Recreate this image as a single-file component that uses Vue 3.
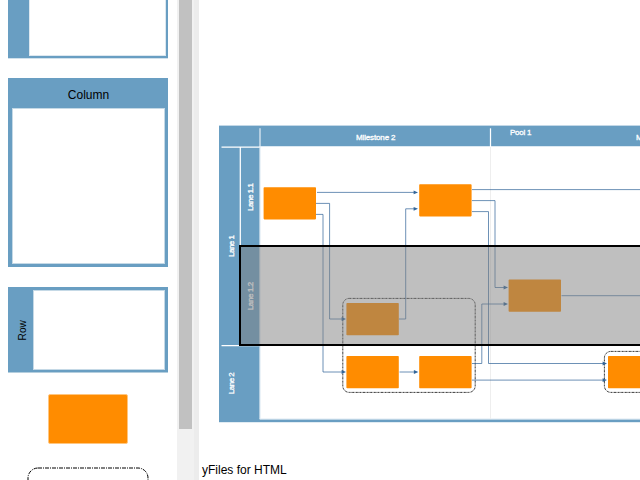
<script setup>
const nodes = [
  [263.6, 187.2], [419.2, 184.2], [346.4, 303], [508.6, 279.6],
  [346.4, 356], [419.2, 356], [608, 356]
]
const edges = [
  'M317 192.4H415',
  'M316 203.4H329.6V319H343',
  'M316 214.4H323V372H343',
  'M399 319H405.7V208.8H415',
  'M472 189.6H650',
  'M472 200.6H495V287.5H505',
  'M472 211.6H488.5V363.5H604',
  'M472 363.5H481.8V304H505',
  'M472 380.1H604',
  'M399.5 372H415',
  'M561.5 295.7H650'
]
const arrows = [
  [418, 192.4], [418, 208.8], [346, 319], [346, 372], [508, 287.5],
  [508, 304], [607, 363.5], [607, 380.1], [418.3, 372]
]
const acrossLabels = [
  { text: 'Milestone 2', x: 356, y: 140, w: 39.5 },
  { text: 'Pool 1', x: 510, y: 135, w: 21.5 },
  { text: 'Milestone 3', x: 636, y: 140, w: 39.5 }
]
const upLabels = [
  { text: 'Lane 1', x: 234.3, y: 257, w: 22 },
  { text: 'Lane 1.1', x: 253.3, y: 211, w: 28 },
  { text: 'Lane 1.2', x: 253.3, y: 310.2, w: 28.5 },
  { text: 'Lane 2', x: 234.3, y: 394.2, w: 22 }
]
</script>

<template>
  <main class="app">
    <aside class="palette">
      <div class="pool"><div class="pane"></div></div>
      <div class="column"><span class="title">Column</span><div class="pane"></div></div>
      <div class="row"><div class="side"><span>Row</span></div><div class="pane"></div></div>
      <div class="shape"></div>
      <svg class="group" width="122" height="60" viewBox="27 467 122 60">
        <rect x="28" y="468" width="120" height="80" rx="10" class="dash big" />
      </svg>
    </aside>
    <div class="scrollbar"><div class="thumb"></div></div>
    <div class="splitter"></div>
    <section class="editor">
      <svg class="canvas" width="441" height="460" viewBox="199 0 441 460">
        <rect x="219" y="125.6" width="440" height="296.6" class="blue" />
        <rect x="260" y="147" width="400" height="272.3" fill="#fff" />
        <path d="M259.5 146.5H640M259.5 419H640" class="soft" />
        <path d="M221.5 147H260M240.3 147V345M221.5 345.6H259" class="divider" />
        <path d="M260 128.3V419" class="divider pale" />
        <path d="M490.5 128.3V147" class="divider" />
        <path d="M490.5 147V419" class="milestone" />
        <rect x="342.8" y="298.4" width="132.4" height="94" rx="6.5" class="dash" />
        <rect x="604.4" y="351.4" width="60" height="41" rx="6.5" class="dash" />
        <path v-for="d in edges" :key="d" :d="d" class="edge" />
        <path v-for="(a, i) in arrows" :key="i" :d="`M${a[0]} ${a[1]}l-4.4 -1.9v3.8z`" class="arrow" />
        <rect v-for="(n, i) in nodes" :key="i" :x="n[0]" :y="n[1]" width="52.4" height="32.2" rx=".8" class="node" />
        <text v-for="l in acrossLabels" :key="l.text" :x="l.x" :y="l.y" :textLength="l.w" class="label">{{ l.text }}</text>
        <text v-for="l in upLabels" :key="l.text" :transform="`translate(${l.x} ${l.y}) rotate(-90)`" :textLength="l.w" class="label">{{ l.text }}</text>
        <rect x="240" y="246" width="430" height="99" class="selection" />
      </svg>
      <footer>yFiles for HTML</footer>
    </section>
  </main>
</template>

<style>
body { margin: 0; overflow: hidden; background: #fff; }
</style>

<style scoped>
.app { display: flex; width: 640px; height: 480px; overflow: hidden; font: 12px "Liberation Sans", Arial, sans-serif; color: #000; }
.palette { box-sizing: border-box; width: 177px; height: 480px; padding-left: 8px; overflow: hidden; display: flex; flex-direction: column; flex: none; }
.palette > * { flex: none; }
.pool, .column, .row { box-sizing: border-box; width: 160px; background: #699ec2; }
.pane { box-sizing: border-box; flex: 1; background: #fff; border: 1px solid #c5d9e6; }
.pool { height: 58px; padding: 0 2px 2px 21px; box-shadow: 0 1px #d1e1ec; }
.pool .pane { height: 56px; border-top: 0; border-color: #dde8f0; }
.column { height: 189px; margin-top: 20px; padding: 0 3px 3px 4px; display: flex; flex-direction: column; }
.title { height: 30px; line-height: 34px; text-align: center; }
.row { height: 85px; margin-top: 20px; padding: 3px 3px 2px 0; display: flex; box-shadow: 0 1px #b4cede; }
.side { width: 25px; display: flex; align-items: center; justify-content: center; }
.side span { writing-mode: vertical-rl; transform: rotate(180deg); font-size: 10px; line-height: 12px; letter-spacing: .15px; margin-left: 5px; }
.shape { box-sizing: border-box; width: 80px; height: 50px; margin: 22px 0 0 40px; background: #ff8c00; border: 1px solid #ffc67f; border-radius: 2px; }
.group { display: block; margin: 23px 0 0 19px; }
.scrollbar { box-sizing: border-box; width: 17px; height: 480px; padding: 0 2px; background: #f1f1f1; flex: none; }
.thumb { width: 13px; height: 429px; background: #c1c1c1; }
.splitter { width: 5px; background: #ececec; flex: none; }
.editor { width: 441px; display: flex; flex-direction: column; }
.canvas { display: block; flex: none; }
footer { height: 20px; line-height: 20px; padding-left: 3px; }
.blue { fill: #699ec2; }
.soft { stroke: #dce9f2; stroke-width: 1; fill: none; }
.divider { stroke: #fff; stroke-width: 1.25; fill: none; }
.divider.pale { stroke: #e1ecf4; }
.milestone { stroke: #eee; stroke-width: 1; }
.dash { fill: none; stroke: #222; stroke-width: .9; stroke-dasharray: 2 .5 .6 .5; }
.dash.big { stroke: #000; stroke-width: 1; stroke-dasharray: 4 1 1 1; }
.edge { fill: none; stroke: #336699; stroke-opacity: .9; stroke-width: .8; }
.arrow { fill: #336699; }
.node { fill: #ff8c00; }
.label { font-size: 8px; fill: #fff; stroke: #fff; stroke-width: .3; }
.selection { fill: rgba(128, 128, 128, .5); stroke: #000; stroke-width: 2; }
</style>
